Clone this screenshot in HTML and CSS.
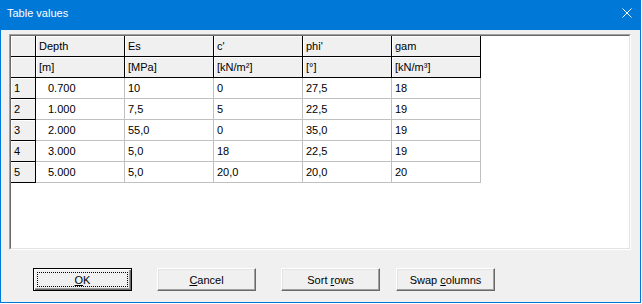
FILE: index.html
```html
<!DOCTYPE html>
<html>

<head>
    <title>Table values</title>
    <meta charset="UTF-8" />
    <link rel="stylesheet" href="styles.css">
</head>

<body>
    <div class="window">
        <header class="titlebar">
            <span class="titlebar__text">Table values</span>
            <svg class="titlebar__close" width="10" height="10" viewBox="0 0 10 10">
                <path d="M0.5 0.5 L9.5 9.5 M9.5 0.5 L0.5 9.5" stroke="#fff" stroke-width="1" fill="none" />
            </svg>
        </header>

        <div class="dialog">
            <!-- Table frame - START -->
            <div class="frame">
                <div class="frame__inner">
                    <div class="grid">
                        <div class="cell cell--head"></div>
                        <div class="cell cell--head">Depth</div>
                        <div class="cell cell--head">Es</div>
                        <div class="cell cell--head">c'</div>
                        <div class="cell cell--head">phi'</div>
                        <div class="cell cell--head">gam</div>

                        <div class="cell cell--head"></div>
                        <div class="cell cell--head">[m]</div>
                        <div class="cell cell--head">[MPa]</div>
                        <div class="cell cell--head">[kN/m²]</div>
                        <div class="cell cell--head">[°]</div>
                        <div class="cell cell--head">[kN/m³]</div>

                        <div class="cell cell--head">1</div>
                        <div class="cell cell--depth">0.700</div>
                        <div class="cell">10</div>
                        <div class="cell">0</div>
                        <div class="cell">27,5</div>
                        <div class="cell">18</div>

                        <div class="cell cell--head">2</div>
                        <div class="cell cell--depth">1.000</div>
                        <div class="cell">7,5</div>
                        <div class="cell">5</div>
                        <div class="cell">22,5</div>
                        <div class="cell">19</div>

                        <div class="cell cell--head">3</div>
                        <div class="cell cell--depth">2.000</div>
                        <div class="cell">55,0</div>
                        <div class="cell">0</div>
                        <div class="cell">35,0</div>
                        <div class="cell">19</div>

                        <div class="cell cell--head">4</div>
                        <div class="cell cell--depth">3.000</div>
                        <div class="cell">5,0</div>
                        <div class="cell">18</div>
                        <div class="cell">22,5</div>
                        <div class="cell">19</div>

                        <div class="cell cell--head">5</div>
                        <div class="cell cell--depth">5.000</div>
                        <div class="cell">5,0</div>
                        <div class="cell">20,0</div>
                        <div class="cell">20,0</div>
                        <div class="cell">20</div>
                    </div>
                </div>
            </div>
            <!-- Table frame - END -->

            <div class="buttons">
                <button class="btn btn--default"><u>O</u>K</button>
                <button class="btn"><u>C</u>ancel</button>
                <button class="btn">Sort <u>r</u>ows</button>
                <button class="btn btn--swap">Swap <u>c</u>olumns</button>
            </div>
        </div>
    </div>
</body>

</html>
```

FILE: styles.css
```css
:root {
    --title-bg: #0078d7;
    --face: #f0f0f0;
    --shadow: #a0a0a0;
    --dark-shadow: #696969;
    --light: #e3e3e3;
    --grid-line: #c0c0c0;
}

* {
    box-sizing: border-box;
}

body {
    margin: 0;
    background: #fff;
    font-family: "Liberation Sans", Arial, sans-serif;
    font-size: 11px;
    color: #000;
}

.window {
    width: 641px;
    height: 303px;
    background: var(--face);
    border: 1px solid var(--title-bg);
    border-top: none;
}

/* Title bar - START */
.titlebar {
    height: 30px;
    background: var(--title-bg);
    display: flex;
    justify-content: space-between;
    align-items: flex-start;
    padding: 6px 8px 0 6px;
}

.titlebar__text {
    color: #fff;
    font-size: 11px;
    line-height: 14px;
}

.titlebar__close {
    margin-top: 2px;
}

/* Title bar - END */

.dialog {
    padding: 4px 9px 0 8px;
}

/* Table frame - START */
.frame {
    height: 216px;
    border: 1px solid;
    border-color: var(--shadow) #fff #fff var(--shadow);
}

.frame__inner {
    height: 100%;
    background: #fff;
    border: 1px solid;
    border-color: var(--dark-shadow) var(--light) var(--light) var(--dark-shadow);
}

.grid {
    display: grid;
    grid-template-columns: 25px repeat(5, 89px);
    grid-auto-rows: 21px;
}

.cell {
    border-right: 1px solid var(--grid-line);
    border-bottom: 1px solid var(--grid-line);
    padding-left: 3px;
    line-height: 20px;
    white-space: nowrap;
    overflow: hidden;
}

.cell--head {
    background: var(--face);
    border-color: #000;
    box-shadow: inset 1px 1px #fff;
}

.cell--depth {
    padding-left: 12px;
}

/* Table frame - END */

/* Buttons - START */
.buttons {
    display: flex;
    gap: 25px;
    padding: 18px 0 0 24px;
}

.btn {
    width: 99px;
    height: 23px;
    padding: 0;
    font-family: inherit;
    font-size: 11px;
    color: #000;
    background: var(--face);
    border: 1px solid;
    border-color: #fff var(--dark-shadow) var(--dark-shadow) #fff;
    box-shadow: inset -1px -1px var(--shadow), inset 1px 1px var(--light);
    border-radius: 0;
}

.btn--default {
    border-color: #000;
    box-shadow: inset 1px 1px #fff, inset -1px -1px var(--dark-shadow), inset -2px -2px var(--shadow);
    outline: 1px dotted #000;
    outline-offset: -5px;
}

.btn--swap {
    margin-left: -9px;
}

/* Buttons - END */
```
